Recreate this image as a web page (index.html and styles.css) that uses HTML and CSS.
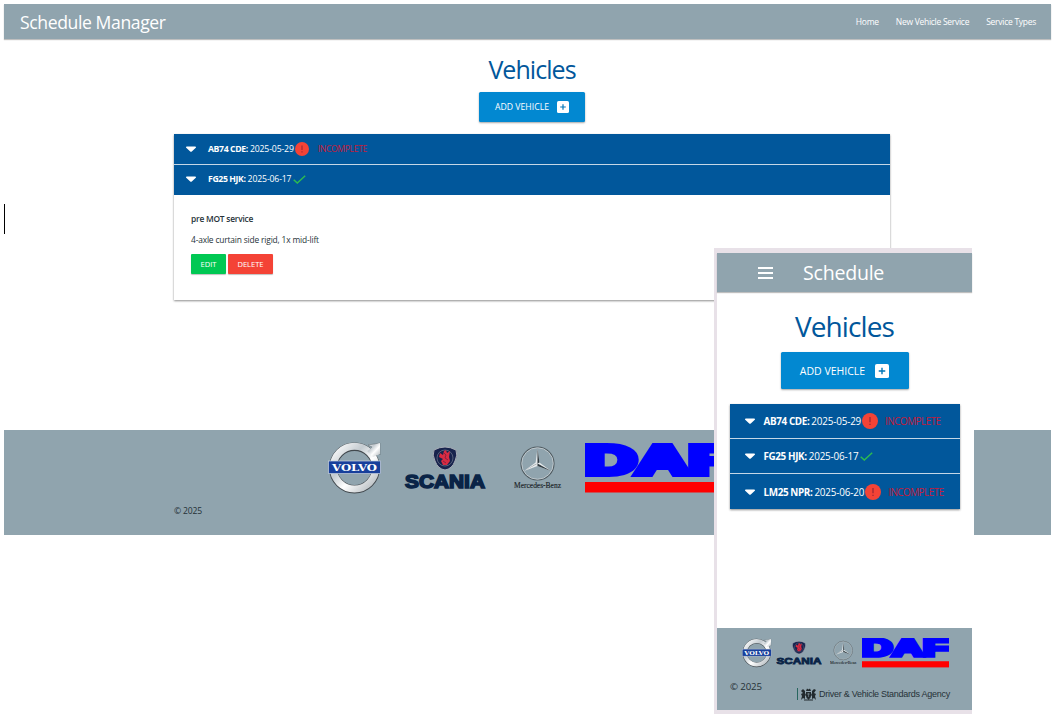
FILE: index.html
```html
<!DOCTYPE html>
<html lang="en">
<head>
<meta charset="utf-8">
<title>Schedule Manager</title>
<link rel="stylesheet" href="styles.css">
</head>
<body>
<svg class="defs" width="0" height="0" aria-hidden="true">
  <defs>
    <linearGradient id="chrome" x1="0" y1="0" x2="1" y2="1">
      <stop offset="0" stop-color="#fff"/><stop offset=".35" stop-color="#c4cbd0"/><stop offset=".6" stop-color="#fff"/><stop offset="1" stop-color="#aeb5ba"/>
    </linearGradient>
    <symbol id="caret" viewBox="0 0 10 6"><path d="M0 1.2Q0 .4.9.4H9.1Q10 .4 10 1.2 10 1.7 9.5 2.1L5.8 5.4Q5 6 4.2 5.4L.5 2.1Q0 1.7 0 1.2Z" fill="#fff"/></symbol>
    <symbol id="plus" viewBox="0 0 12 12"><rect width="12" height="12" rx="1.6" fill="#fff"/><path d="M6 3.2V8.8M3.2 6H8.8" stroke="#0277b8" stroke-width="1.2"/></symbol>
    <symbol id="alert" viewBox="0 0 14 14"><circle cx="7" cy="7" r="7" fill="#f44336"/><path d="M7 3.5V8M7 9.3V10.6" stroke="#a92b35" stroke-width="1.3"/></symbol>
    <symbol id="check" viewBox="0 0 13 9"><path d="M.7 4.7 4.3 8 12.2.8" fill="none" stroke="#2dbb50" stroke-width="1.5"/></symbol>
    <symbol id="volvo" viewBox="0 0 54 52">
      <path d="M40 3 52 1V13L49 9 42 16 38 12 44 5Z" fill="url(#chrome)" stroke="#5e686e" stroke-width=".5"/>
      <circle cx="26.5" cy="26" r="21.3" fill="none" stroke="#42494e" stroke-width="8.4"/>
      <circle cx="26.5" cy="25.6" r="21.3" fill="none" stroke="url(#chrome)" stroke-width="7"/>
      <path d="M39 9 49 2 52 1V12L45 15Z" fill="url(#chrome)"/>
      <rect x=".5" y="19" width="52" height="12.6" fill="#173f9b" stroke="#c9d2de" stroke-width=".7"/>
      <text x="4" y="28.8" class="volvo-word" textLength="45" lengthAdjust="spacingAndGlyphs">VOLVO</text>
    </symbol>
    <symbol id="scania" viewBox="0 0 82 44">
      <path d="M30 4Q41-2 52 4 54 9 51 15 48 23 41 24 34 23 31 15 28 9 30 4Z" fill="#17234d" stroke="#a7acb6" stroke-width="1"/>
      <circle cx="41" cy="12" r="8" fill="none" stroke="#7e8698" stroke-width=".6"/>
      <path d="M36 7 39 9 40 5 42 4 43 7 46 5 45 11 46 15 43 19 39 19 37 15 39 13 35 11Z" fill="#d92b42"/>
      <path d="M40 7 42 9 41 12 44 14M39 15 42 17" fill="none" stroke="#612044" stroke-width=".7"/>
      <text x="1" y="41.5" class="scania-word" textLength="80" lengthAdjust="spacingAndGlyphs">SCANIA</text>
    </symbol>
    <symbol id="mercedes" viewBox="0 0 48 44">
      <circle cx="23.5" cy="17.5" r="16.4" fill="none" stroke="#4f5b61" stroke-width="1.4"/>
      <circle cx="23.5" cy="17.5" r="15.8" fill="none" stroke="#d0d7da" stroke-width=".8"/>
      <path d="M23.5 2 25.4 16.5 37 25 23.5 20 10 25 21.6 16.5Z" fill="#e6eaec"/>
      <path d="M23.5 2 25.4 16.5 23.5 17.5ZM37 25 23.5 20V17.5ZM10 25 21.6 18.2 23.5 17.5Z" fill="#303b41"/>
      <text x="0" y="42" class="mercedes-word" textLength="47" lengthAdjust="spacingAndGlyphs">Mercedes-Benz</text>
    </symbol>
    <symbol id="daf" viewBox="0 0 148 50">
      <text x="-1" y="30.5" class="daf-word" textLength="149" lengthAdjust="spacingAndGlyphs">DAF</text>
      <rect y="39" width="148" height="10.5" fill="#f00"/>
    </symbol>
    <symbol id="crest" viewBox="0 0 15 13">
      <path d="M5 3 6 .5 7.5 1.5 9 .5 10 3ZM5 4H10V8Q10 10 7.5 11.5 5 10 5 8ZM0 3 2 1 4 3 4 5 5 7 4 8 4 11 2 10 0 12 1 8 0 6 2 5ZM15 2 13 1 11 3 11 5 10 7 11 8 11 11 13 10 15 12 14 8 15 6 13 5ZM3 11.5H12V12.5H3Z" fill="#222a2e"/>
      <path d="M6 6H9M7.5 5V9" stroke="#90a4ae" stroke-width=".5"/>
    </symbol>
  </defs>
</svg>

<div class="page">
  <header class="nav">
    <span class="brand">Schedule Manager</span>
    <nav class="links"><a>Home</a><a>New Vehicle Service</a><a>Service Types</a></nav>
  </header>
  <main class="main">
    <h1 class="title">Vehicles</h1>
    <button class="add"><span>ADD VEHICLE</span><svg class="plus"><use href="#plus"/></svg></button>
    <section class="list">
      <div class="row"><svg class="caret"><use href="#caret"/></svg><b class="reg">AB74 CDE:</b><span class="date">2025-05-29</span><svg class="alert"><use href="#alert"/></svg><span class="status">INCOMPLETE</span></div>
      <div class="row"><svg class="caret"><use href="#caret"/></svg><b class="reg">FG25 HJK:</b><span class="date">2025-06-17</span><svg class="check"><use href="#check"/></svg></div>
      <div class="detail">
        <p class="service">pre MOT service</p>
        <p class="desc">4-axle curtain side rigid, 1x mid-lift</p>
        <div class="actions"><button class="btn edit">EDIT</button><button class="btn delete">DELETE</button></div>
      </div>
    </section>
  </main>
  <footer class="footer">
    <div class="logos"><svg class="volvo"><use href="#volvo"/></svg><svg class="scania"><use href="#scania"/></svg><svg class="mercedes"><use href="#mercedes"/></svg><svg class="daf"><use href="#daf"/></svg></div>
    <p class="copy">© 2025</p>
  </footer>
</div>
<div class="cursor"></div>

<aside class="phone">
  <header class="nav">
    <svg class="burger" viewBox="0 0 15 14"><path d="M0 2H15M0 7H15M0 12H15" stroke="#fff" stroke-width="2"/></svg>
    <span class="brand">Schedule</span>
  </header>
  <main class="main">
    <h1 class="title">Vehicles</h1>
    <button class="add"><span>ADD VEHICLE</span><svg class="plus"><use href="#plus"/></svg></button>
    <section class="list">
      <div class="row"><svg class="caret"><use href="#caret"/></svg><b class="reg">AB74 CDE:</b><span class="date">2025-05-29</span><svg class="alert"><use href="#alert"/></svg><span class="status">INCOMPLETE</span></div>
      <div class="row"><svg class="caret"><use href="#caret"/></svg><b class="reg">FG25 HJK:</b><span class="date">2025-06-17</span><svg class="check"><use href="#check"/></svg></div>
      <div class="row"><svg class="caret"><use href="#caret"/></svg><b class="reg">LM25 NPR:</b><span class="date">2025-06-20</span><svg class="alert"><use href="#alert"/></svg><span class="status">INCOMPLETE</span></div>
    </section>
  </main>
  <footer class="footer">
    <div class="logos"><svg class="volvo"><use href="#volvo"/></svg><svg class="scania"><use href="#scania"/></svg><svg class="mercedes"><use href="#mercedes"/></svg><svg class="daf"><use href="#daf"/></svg></div>
    <div class="legal"><p class="copy">© 2025</p><div class="agency"><svg class="crest"><use href="#crest"/></svg><span>Driver &amp; Vehicle Standards Agency</span></div></div>
  </footer>
</aside>
</body>
</html>
```
FILE: styles.css
```css
* { box-sizing: border-box; }
body { margin: 0; width: 1055px; height: 717px; overflow: hidden; position: relative; background: #fff; font-family: "Open Sans", "Noto Sans", sans-serif; color: #263238; }
h1, p { margin: 0; font-weight: 400; }
button { border: 0; padding: 0; font-family: inherit; color: #fff; }
svg { display: block; flex: none; }
.defs { position: absolute; }
.volvo-word { font: bold 10px "DejaVu Serif", serif; fill: #fff; }
.scania-word { font: bold 17.5px "Liberation Sans", sans-serif; fill: #0a2447; stroke: #0a2447; stroke-width: 1.5px; }
.mercedes-word { font: 8px "Liberation Serif", serif; fill: #1c2529; stroke: #1c2529; stroke-width: .15px; }
.daf-word { font: bold 40px "Liberation Sans", sans-serif; fill: #00f; stroke: #00f; stroke-width: 6px; }

.page { padding: 4px 4px 0; }
.nav { display: flex; align-items: center; background: #90a4ae; color: #fff; box-shadow: 0 1px 1px rgba(0,0,0,.25); }
.page > .nav { height: 35px; justify-content: space-between; padding: 0 15px 0 16px; }
.brand { font-size: 17.6px; letter-spacing: -.4px; white-space: nowrap; }
.links { display: flex; gap: 17px; font-size: 8.5px; letter-spacing: -.27px; white-space: nowrap; }
.main { display: flex; flex-direction: column; align-items: center; }
.page > .main { height: 391px; padding: 15px 0 0 9px; }
.title { font-size: 25px; line-height: 30px; color: #01579b; letter-spacing: -.95px; }
.add { display: flex; align-items: center; justify-content: center; background: #0288d1; border-radius: 1.5px; box-shadow: 0 1px 2px rgba(0,0,0,.35); white-space: nowrap; }
.page .add { width: 106px; height: 30px; margin-top: 8px; gap: 8px; font-size: 8.7px; }
.plus { width: 12px; height: 12px; }
.list { box-shadow: 0 1px 2px rgba(0,0,0,.45); background: #fff; }
.page .list { width: 716px; height: 166px; margin-top: 12px; }
.row { display: flex; align-items: center; background: #01579b; border-bottom: 1px solid #c5d7e6; color: #fff; white-space: nowrap; }
.page .row { height: 30.5px; padding-left: 12px; font-size: 8.7px; }
.page .row:nth-child(2) { border-bottom-color: #01579b; }
.caret { width: 10px; height: 6px; margin-right: 12px; }
.reg { font-weight: 700; letter-spacing: -.38px; margin-right: 2px; }
.date { letter-spacing: -.15px; }
.alert { width: 14px; height: 14px; margin-left: 1px; }
.check { width: 13px; height: 9px; margin-left: 2px; }
.status { color: #c21c3b; margin-left: 9px; letter-spacing: -.4px; }
.detail { padding: 17px; font-size: 8.4px; }
.service { font-weight: 600; line-height: 14px; letter-spacing: -.22px; }
.desc { line-height: 14px; margin-top: 7px; letter-spacing: -.16px; }
.actions { display: flex; gap: 2px; margin-top: 7px; }
.btn { height: 20px; font-size: 7.6px; letter-spacing: -.05px; border-radius: 1px; box-shadow: 0 1px 1px rgba(0,0,0,.25); }
.edit { width: 35px; background: #00c853; }
.delete { width: 45px; background: #f44336; }
.footer { background: #90a4ae; }
.page .footer { height: 105px; padding: 12px 0 0 170px; }
.page .logos { display: flex; height: 62px; padding-left: 154px; }
.page .volvo { width: 54px; height: 52px; }
.page .scania { width: 82px; height: 44px; margin: 4px 0 0 22px; }
.page .mercedes { width: 48px; height: 44px; margin: 4px 0 0 28px; }
.page .daf { width: 148px; height: 50px; margin: 1px 0 0 23px; }
.copy { font-size: 8.6px; line-height: 14px; letter-spacing: -.15px; }
.cursor { position: absolute; left: 4px; top: 204px; width: 1px; height: 30px; background: #000; }

.phone { position: absolute; left: 714px; top: 248px; width: 260px; height: 466px; background: #fff; border-left: 3px solid #e8e1e8; }
.phone::before, .phone::after { content: ""; display: block; width: 255px; background: #e8e1e8; }
.phone::before { height: 5px; }
.phone::after { height: 4px; }
.phone .nav { width: 255px; height: 39px; padding-left: 41px; gap: 30px; }
.burger { width: 15px; height: 14px; }
.phone .brand { font-size: 19.6px; letter-spacing: -.25px; }
.phone .main { width: 255px; height: 336px; padding: 17px 0 0; }
.phone .title { font-size: 28px; line-height: 34px; letter-spacing: -.9px; }
.phone .add { width: 128px; height: 37px; margin-top: 9px; gap: 10px; font-size: 10.5px; }
.phone .plus { width: 14px; height: 14px; }
.phone .list { width: 230px; margin: 15px 0 0 0; }
.phone .row { height: 35px; padding-left: 15px; font-size: 9.9px; }
.phone .row:last-child { border-bottom: 0; }
.phone .caret { margin-right: 9px; }
.phone .date { letter-spacing: -.18px; }
.phone .alert { width: 16px; height: 16px; }
.phone .status { margin-left: 7px; letter-spacing: -.5px; }
.phone .footer { width: 255px; height: 82px; padding: 10px 0 0 13px; }
.phone .logos { display: flex; height: 42px; padding-left: 12px; }
.phone .volvo { width: 30px; height: 30px; }
.phone .scania { width: 46px; height: 26px; margin: 2px 0 0 4px; }
.phone .mercedes { width: 27px; height: 26px; margin: 2px 0 0 8px; }
.phone .daf { width: 87px; height: 30px; margin-left: 5px; }
.legal { display: flex; align-items: flex-start; }
.phone .copy { width: 67px; font-size: 9.7px; }
.agency { display: flex; align-items: center; gap: 3px; height: 12px; margin-top: 8px; border-left: 1px solid #28665f; padding-left: 3px; font: 9px "Liberation Sans", sans-serif; letter-spacing: -.26px; white-space: nowrap; }
.crest { width: 15px; height: 13px; }
```
